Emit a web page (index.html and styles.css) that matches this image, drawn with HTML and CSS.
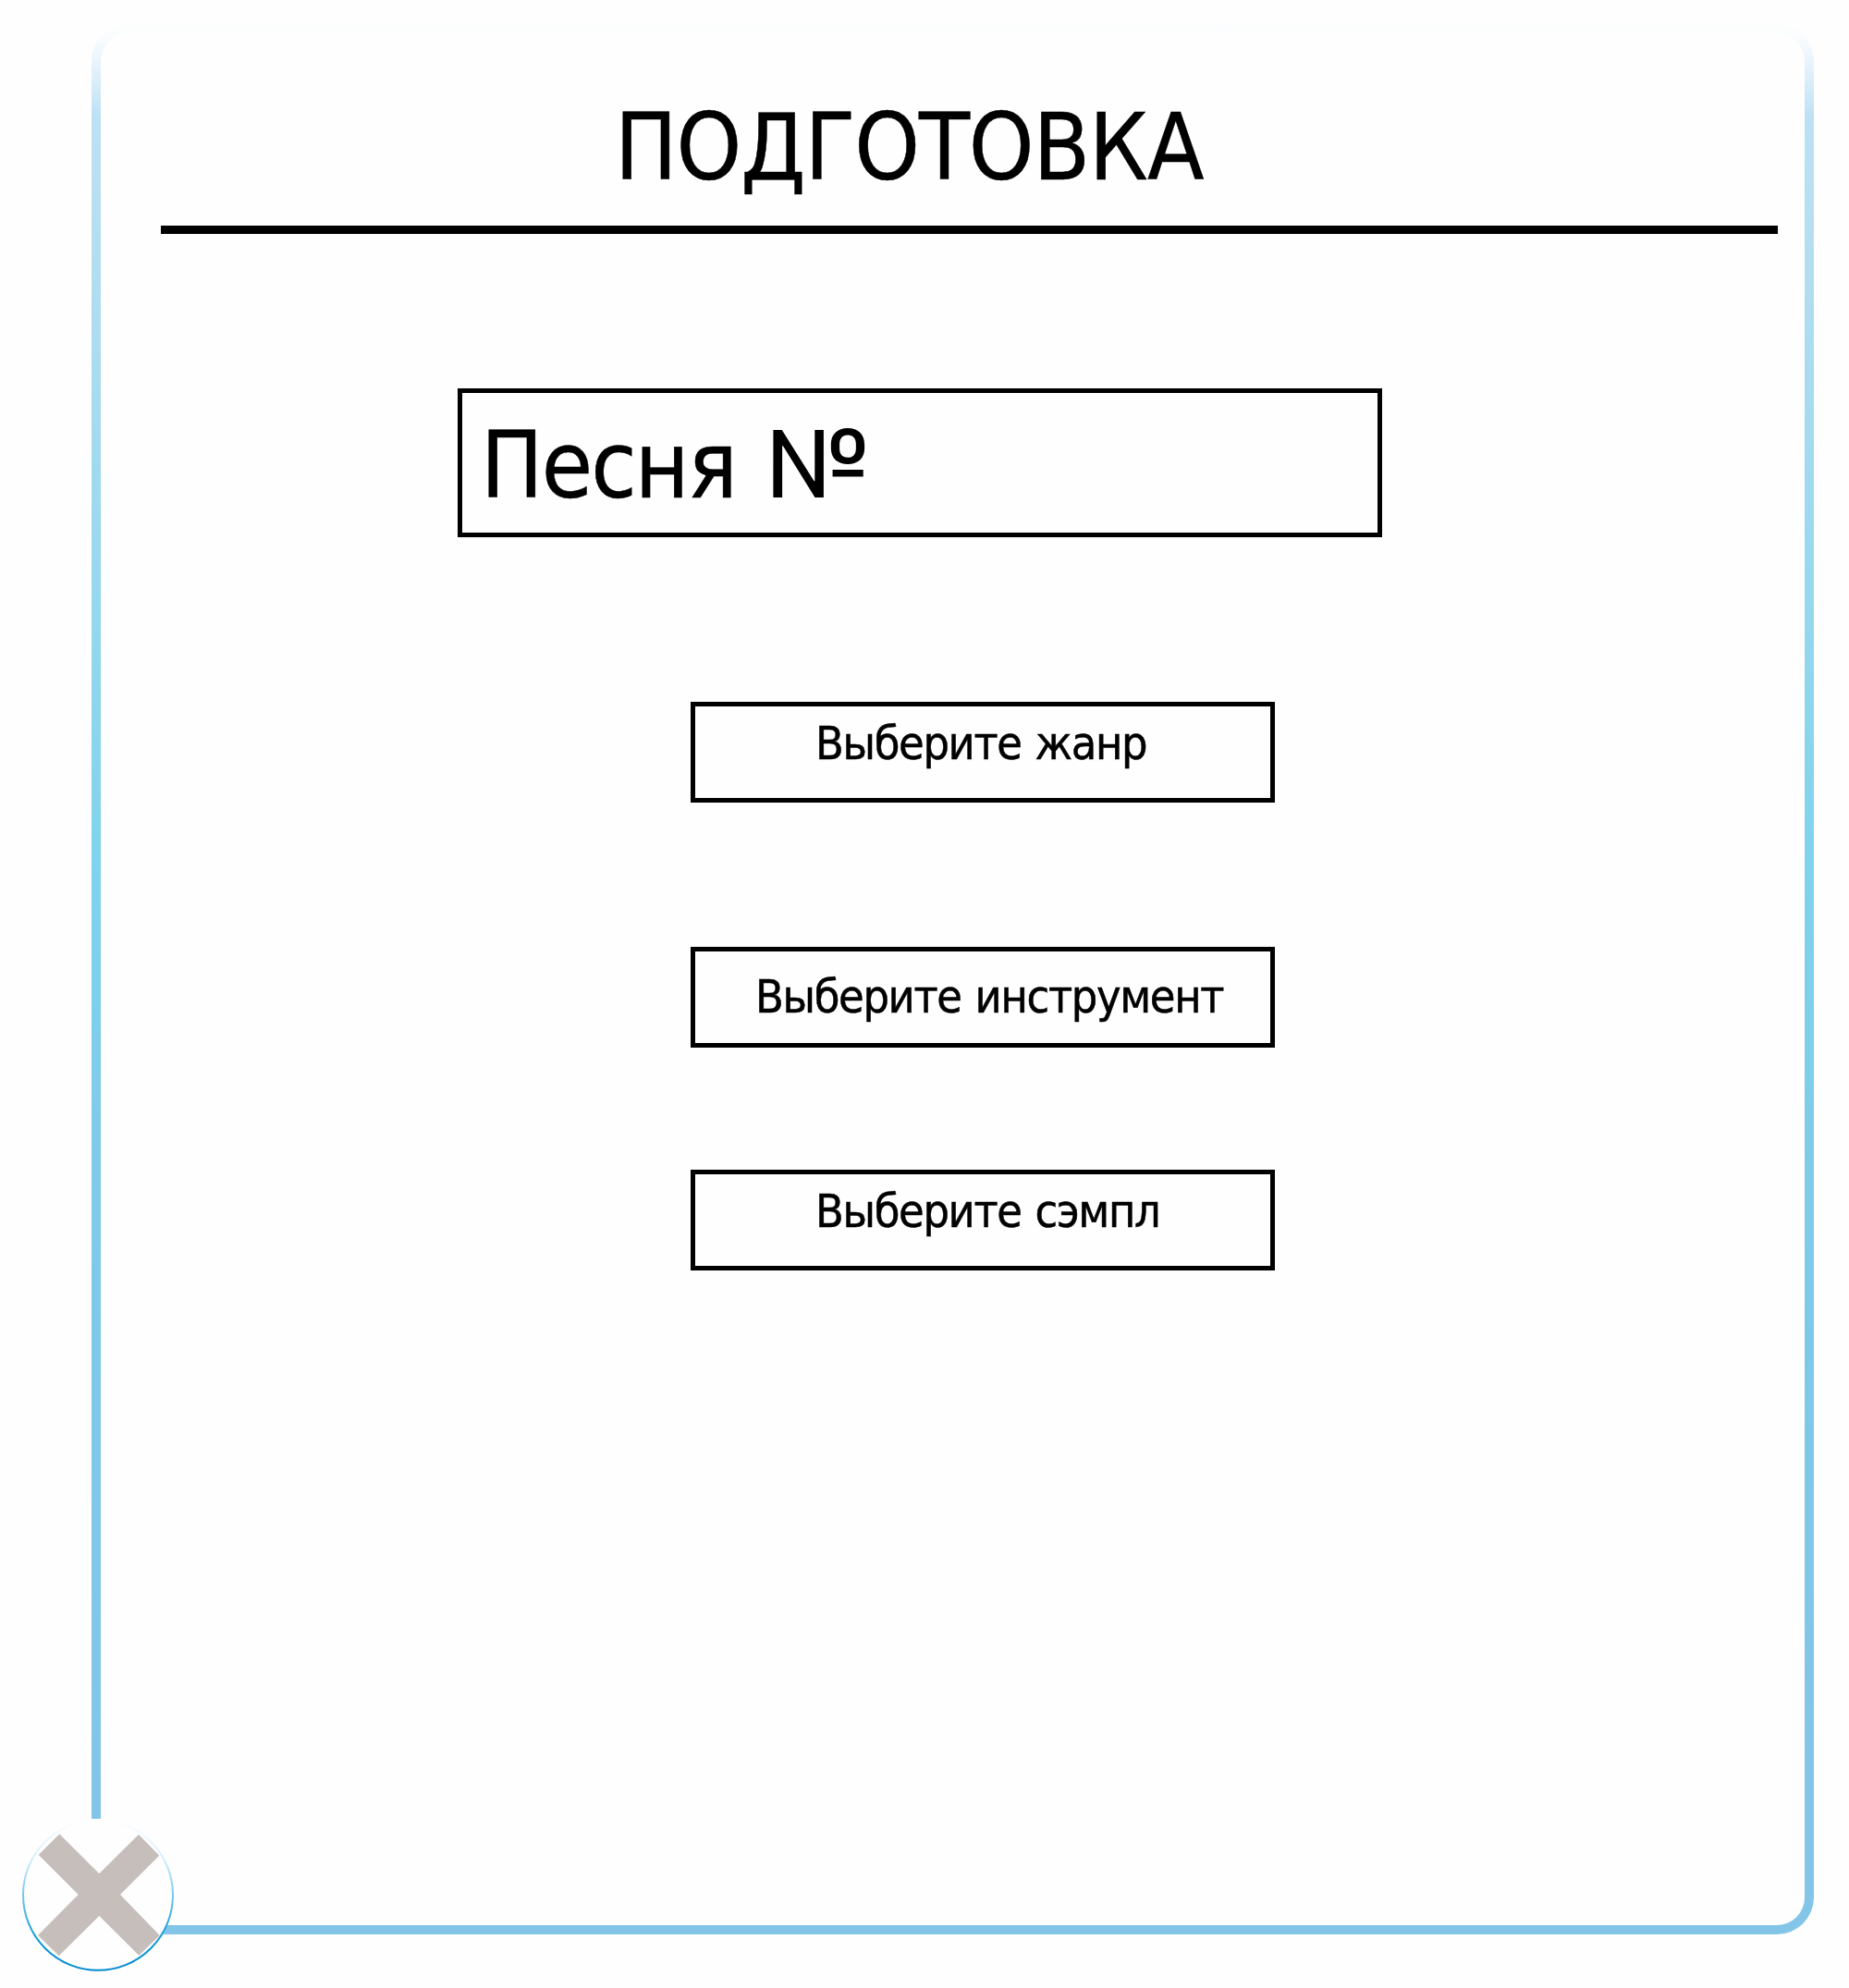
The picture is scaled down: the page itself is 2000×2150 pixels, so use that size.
FILE: index.html
```html
<!DOCTYPE html>
<html lang="ru">
<head>
<meta charset="utf-8">
<title>Подготовка</title>
<link rel="stylesheet" href="styles.css">
</head>
<body>
<main class="panel">
  <header class="header"><h1 class="title">ПОДГОТОВКА</h1></header>
  <div class="song"><span class="song-text">Песня <span class="numero">№</span></span></div>
  <div class="options">
    <button class="option genre"><span>Выберите жанр</span></button>
    <button class="option instrument"><span>Выберите инструмент</span></button>
    <button class="option sample"><span>Выберите сэмпл</span></button>
  </div>
</main>
<button class="close" aria-label="Закрыть">
  <svg width="166" height="166" viewBox="0 0 166 166">
    <defs>
      <linearGradient id="ring" x1="0" y1="0" x2="0" y2="1">
        <stop offset="0" stop-color="#ffffff"/>
        <stop offset=".25" stop-color="#d5f0fd"/>
        <stop offset=".5" stop-color="#75c8ee"/>
        <stop offset=".75" stop-color="#16a0db"/>
        <stop offset="1" stop-color="#0088cc"/>
      </linearGradient>
    </defs>
    <rect x="60" y="1" width="40" height="40" fill="#fefefe"/>
    <ellipse cx="83" cy="83.4" rx="81" ry="81.4" fill="#fefefe" stroke="url(#ring)" stroke-width="2"/>
    <path d="M41.3 17.6 84.3 60.3 127 18 149.3 40.7 107 83 149.7 127 127.3 148.7 84.3 106 40.7 149.3 18 127 61.7 83 18.7 40Z" transform="translate(23 0) translate(-23 0)" fill="#c6beba"/>
  </svg>
</button>
</body>
</html>
```
FILE: styles.css
```css
* { box-sizing: border-box; }
body {
  margin: 0;
  width: 2000px;
  height: 2150px;
  padding: 26px 0 0 99px;
  background: #fefefe;
  color: #000;
  font-family: "DejaVu Sans Condensed", "DejaVu Sans", sans-serif;
  font-stretch: condensed;
  position: relative;
}
.panel {
  width: 1863px;
  height: 2066px;
  border: 10px solid transparent;
  border-radius: 40px;
  background:
    linear-gradient(#fefefe, #fefefe) padding-box,
    linear-gradient(#fdfefe 0, #fafdfe 12px, #edf6fd 35px, #bce0f4 102px, #b9dff1 174px, #7fd3ec 914px, #7ecbe8 1220px, #82c5e8 1900px) border-box;
}
.header {
  height: 217px;
  margin: 0 29px 0 65px;
  padding: 64px 0 0 491px;
  border-bottom: 9px solid #000;
}
.title {
  margin: 0;
  font-size: 100px;
  font-weight: 400;
  line-height: 120px;
  letter-spacing: -1.1px;
  white-space: nowrap;
  -webkit-text-stroke: 0.5px #000;
}
.song {
  width: 1000px;
  height: 161px;
  margin: 167px 0 0 386px;
  padding: 19px 0 0 20px;
  border: 5px solid #000;
  font-size: 100px;
  line-height: 120px;
  letter-spacing: -1.9px;
  white-space: nowrap;
  -webkit-text-stroke: 0.5px #000;
}
.numero {
  display: inline-block;
  margin-left: 4px;
  font-family: Inter, sans-serif;
  font-stretch: normal;
  font-size: 101px;
  line-height: 1;
  transform: scaleX(1.06);
  transform-origin: left;
  -webkit-text-stroke: 0;
}
.options {
  display: flex;
  flex-direction: column;
  margin: 178px 0 0 638px;
}
.option {
  width: 632px;
  height: 109px;
  padding: 0;
  border: 5px solid #000;
  background: none;
  color: inherit;
  font: inherit;
  font-size: 50px;
  line-height: 60px;
  letter-spacing: -1.35px;
  word-spacing: 2px;
  white-space: nowrap;
  text-align: left;
  display: flex;
  align-items: flex-start;
  -webkit-text-stroke: 0.5px #000;
}
.genre { padding: 10px 0 0 130px; }
.instrument { margin-top: 156px; padding: 19px 0 0 65px; }
.sample { margin-top: 132px; padding: 10px 0 0 130px; }
.close {
  position: absolute;
  left: 23px;
  top: 1966px;
  width: 166px;
  height: 166px;
  padding: 0;
  border: 0;
  background: none;
}
.close svg { display: block; }
```
